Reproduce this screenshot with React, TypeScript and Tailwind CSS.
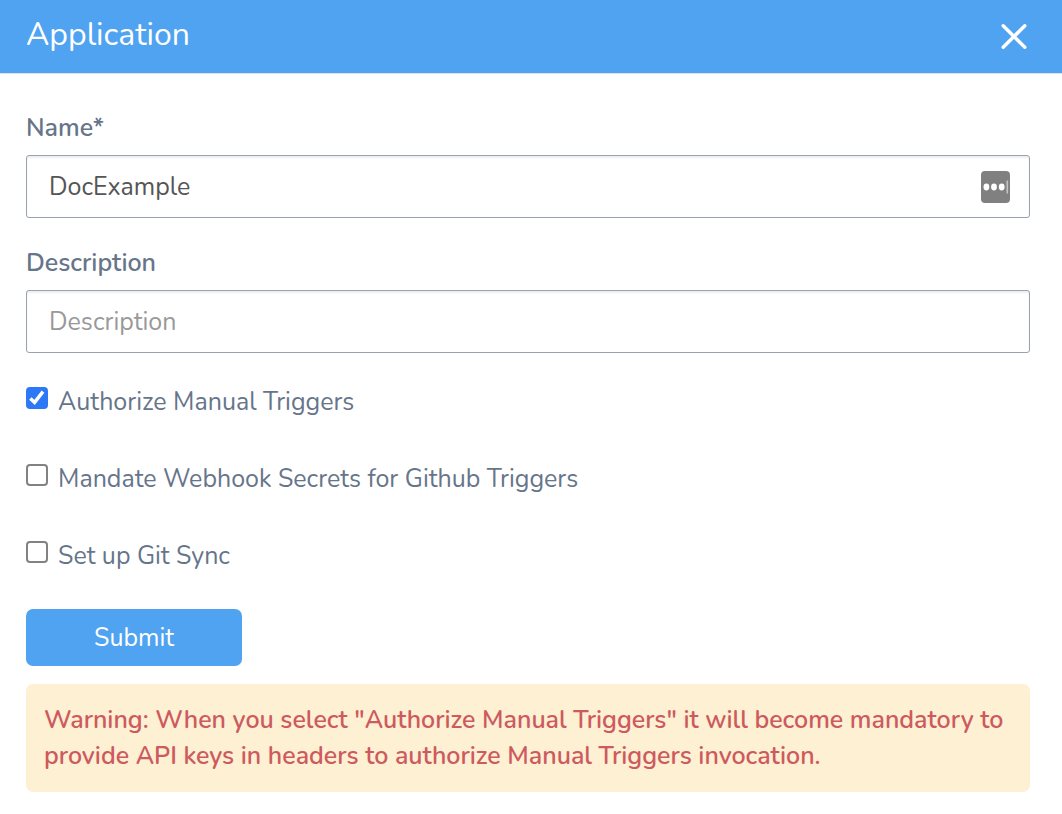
import { useState } from 'react';

const options = [
  { id: 'manual', label: 'Authorize Manual Triggers' },
  { id: 'webhook', label: 'Mandate Webhook Secrets for Github Triggers' },
  { id: 'gitsync', label: 'Set up Git Sync' },
];

const inputClass =
  'block h-[63px] w-full rounded-[3px] border border-[#98a2b0] bg-white pl-[22px] pr-16 text-[25px] text-[#555555] shadow-[inset_0_2px_2px_rgba(0,0,0,0.07)] outline-none placeholder:text-[#999999] placeholder:opacity-100';

function CheckOption({ id, label, checked, onChange }: { id: string; label: string; checked: boolean; onChange: () => void }) {
  return (
    <div className="flex items-start gap-[10px]">
      <span className="mt-[3px] grid size-[22px] shrink-0">
        <input
          id={id}
          type="checkbox"
          checked={checked}
          onChange={onChange}
          className="col-start-1 row-start-1 size-[22px] appearance-none rounded-[4px] border-2 border-[#828282] bg-white checked:border-[#2d78f7] checked:bg-[#2d78f7]"
        />
        {checked && (
          <svg viewBox="0 0 22 22" className="pointer-events-none col-start-1 row-start-1 size-[22px]" aria-hidden="true">
            <path d="M4.4 11.4L8.6 15.4L17 4.6" fill="none" stroke="white" strokeWidth="3.4" />
          </svg>
        )}
      </span>
      <label htmlFor={id}>{label}</label>
    </div>
  );
}

export default function App() {
  const [name, setName] = useState('DocExample');
  const [description, setDescription] = useState('');
  const [selected, setSelected] = useState<string[]>(['manual']);

  const toggle = (id: string) =>
    setSelected((current) => (current.includes(id) ? current.filter((item) => item !== id) : [...current, id]));

  return (
    <div className="min-h-screen bg-white font-['Nunito','Lato',sans-serif] text-[25px] leading-[36px] text-[#66758a] antialiased">
      <header className="flex h-[74px] items-center justify-between border-b border-[#dbe4ee] bg-[#4fa3f0] pl-[26px] pr-[34px] text-white">
        <h1 className="pb-1 text-[32px] leading-[40px]">Application</h1>
        <button type="button" aria-label="Close" className="size-7">
          <svg viewBox="0 0 28 28" className="size-7" fill="none" stroke="currentColor" strokeWidth="3.4" strokeLinecap="round" aria-hidden="true">
            <path d="M3.2 2.7L24.8 24.3M24.8 2.7L3.2 24.3" />
          </svg>
        </button>
      </header>

      <form className="pb-[22px] pl-[26px] pr-8 pt-9" onSubmit={(event) => event.preventDefault()}>
        <label htmlFor="name" className="mb-[9px] block font-semibold">Name*</label>
        <div className="relative">
          <input id="name" value={name} onChange={(event) => setName(event.target.value)} className={inputClass} />
          <svg viewBox="0 0 29 32" className="absolute right-5 top-4 h-8 w-[29px]" aria-hidden="true">
            <rect width="29" height="32" rx="4" fill="#808080" />
            <ellipse cx="5.4" cy="16" rx="2.9" ry="3.4" fill="white" />
            <ellipse cx="13" cy="16" rx="2.9" ry="3.4" fill="white" />
            <ellipse cx="20.7" cy="16" rx="2.9" ry="3.4" fill="white" />
            <path d="M26.3 9.5V22.5" stroke="#c4c4c4" strokeWidth="1.6" />
          </svg>
        </div>

        <label htmlFor="description" className="mb-[9px] mt-[27px] block font-semibold">Description</label>
        <input
          id="description"
          placeholder="Description"
          value={description}
          onChange={(event) => setDescription(event.target.value)}
          className={inputClass}
        />

        <div className="mt-[31px] flex flex-col gap-[41px]">
          {options.map((option) => (
            <CheckOption key={option.id} {...option} checked={selected.includes(option.id)} onChange={() => toggle(option.id)} />
          ))}
        </div>

        <button type="submit" className="mt-[35px] block h-[57px] w-[216px] rounded-[7px] bg-[#4fa3f0] text-white">
          Submit
        </button>

        <p role="alert" className="mt-[18px] rounded-[7px] bg-[#fdf0d3] p-[18px] font-semibold text-[#cd5a5e]">
          Warning: When you select "Authorize Manual Triggers" it will become mandatory to provide API keys in headers to authorize Manual Triggers invocation.
        </p>
      </form>
    </div>
  );
}
